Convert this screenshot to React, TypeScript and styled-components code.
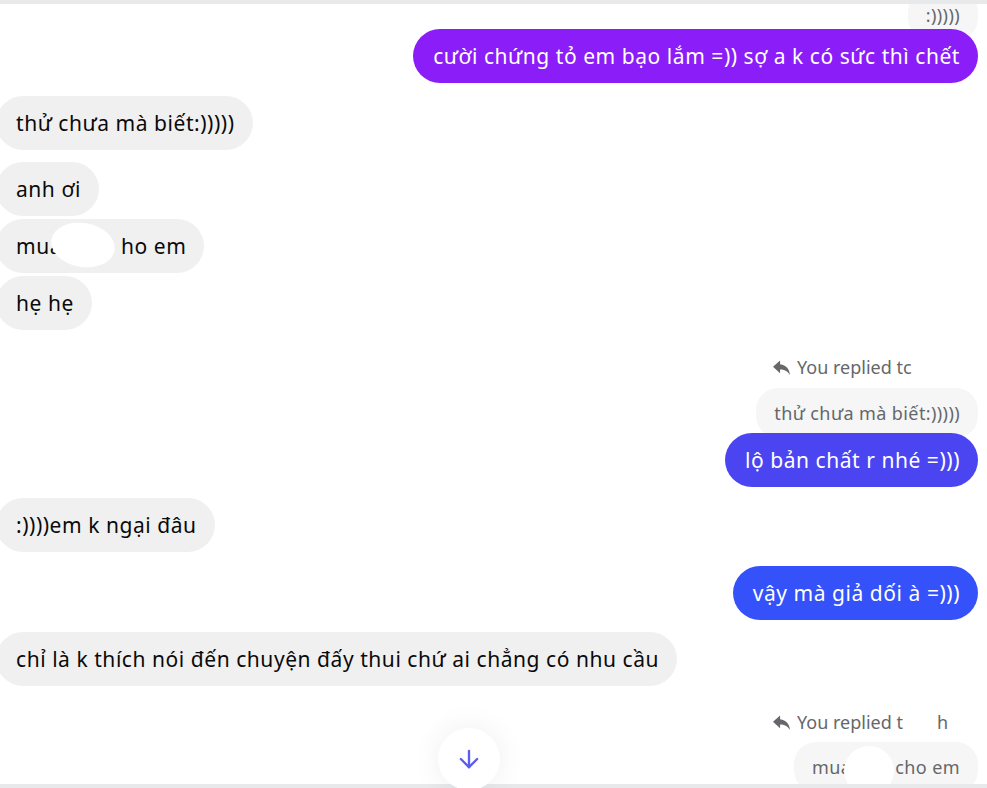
import { createGlobalStyle, styled } from 'styled-components'
import { ArrowDown } from 'lucide-react'

const GlobalStyle = createGlobalStyle`
  html, body {
    margin: 0;
    padding: 0;
    background: #ffffff;
  }
  body {
    font-family: "Noto Sans", "Open Sans", sans-serif;
  }
`

const Page = styled.div`
  position: relative;
  width: 987px;
  height: 788px;
  display: flex;
  flex-direction: column;
  overflow: hidden;
  background: #ffffff;
`

const TopBar = styled.div`
  height: 4px;
  flex: none;
  background: #e8e9eb;
  position: relative;
  z-index: 2;
`

const Thread = styled.div`
  flex: 1;
  display: flex;
  flex-direction: column;
  overflow: hidden;
`

const BottomBar = styled.div`
  height: 4px;
  flex: none;
  background: #e8e9eb;
`

const Row = styled.div<{ $out?: boolean; $mt?: number }>`
  display: flex;
  justify-content: ${(p) => (p.$out ? 'flex-end' : 'flex-start')};
  margin-top: ${(p) => p.$mt ?? 0}px;
  padding-right: ${(p) => (p.$out ? 9 : 0)}px;
  flex: none;
`

const Bubble = styled.div<{ $bg?: string }>`
  position: relative;
  height: 54px;
  display: flex;
  align-items: center;
  padding: 0 18px 0 20px;
  border-radius: 27px;
  font-size: 21px;
  letter-spacing: 0.55px;
  white-space: nowrap;
  background: ${(p) => p.$bg ?? '#f0f0f0'};
  color: ${(p) => (p.$bg ? '#ffffff' : '#0a0a0a')};
  margin-left: ${(p) => (p.$bg ? 0 : -4)}px;
  z-index: 1;
`

const Preview = styled.div`
  position: relative;
  height: 50px;
  display: flex;
  align-items: center;
  padding: 0 18px;
  border-radius: 22px;
  background: #f6f6f6;
  color: #65676b;
  font-size: 18px;
  letter-spacing: 0.4px;
  white-space: nowrap;
`

const ReplyMeta = styled.div`
  width: 206px;
  height: 22px;
  display: flex;
  align-items: center;
  gap: 6px;
  color: #65676b;
  font-size: 18px;
  white-space: nowrap;
  position: relative;

  svg {
    flex: none;
  }
`

const Gap = styled.span<{ $w: number }>`
  display: inline-block;
  width: ${(p) => p.$w}px;
`

const Blob = styled.span<{ $x: number; $y: number; $w: number; $h: number; $r?: number }>`
  position: absolute;
  left: ${(p) => p.$x}px;
  top: ${(p) => p.$y}px;
  width: ${(p) => p.$w}px;
  height: ${(p) => p.$h}px;
  border-radius: 50%;
  background: #ffffff;
  transform: rotate(${(p) => p.$r ?? 0}deg);
`

const ScrollDown = styled.button`
  all: unset;
  position: absolute;
  left: 438px;
  top: 728px;
  width: 62px;
  height: 62px;
  border-radius: 50%;
  background: #ffffff;
  display: flex;
  align-items: center;
  justify-content: center;
  color: #5b5cf0;
  box-shadow: 0 0 30px rgba(0, 0, 0, 0.07);
  z-index: 3;
`

function ReplyIcon() {
  return (
    <svg width="19" height="17" viewBox="0 0 20 18" fill="#65676b">
      <path d="M8.5 1.5 L1 8.2 L8.5 15 V11 C13 11 16.5 12.5 19 17 C18.4 11 15 6.2 8.5 5.6 Z" />
    </svg>
  )
}

export default function App() {
  return (
    <Page>
      <GlobalStyle />
      <TopBar />
      <Thread>
        <Row $out $mt={-14}>
          <Preview>:)))))</Preview>
        </Row>
        <Row $out $mt={-11}>
          <Bubble $bg="#8b1df8">cười chứng tỏ em bạo lắm =)) sợ a k có sức thì chết</Bubble>
        </Row>
        <Row $mt={13}>
          <Bubble>thử chưa mà biết:)))))</Bubble>
        </Row>
        <Row $mt={12}>
          <Bubble>anh ơi</Bubble>
        </Row>
        <Row $mt={3}>
          <Bubble>
            mua
            <Gap $w={59} />
            ho em
            <Blob $x={55} $y={4} $w={64} $h={44} $r={10} />
          </Bubble>
        </Row>
        <Row $mt={3}>
          <Bubble>hẹ hẹ</Bubble>
        </Row>
        <Row $out $mt={26}>
          <ReplyMeta>
            <ReplyIcon />
            You replied tc
          </ReplyMeta>
        </Row>
        <Row $out $mt={10}>
          <Preview>thử chưa mà biết:)))))</Preview>
        </Row>
        <Row $out $mt={-5}>
          <Bubble $bg="#4a44f1">lộ bản chất r nhé =)))</Bubble>
        </Row>
        <Row $mt={11}>
          <Bubble>:))))em k ngại đâu</Bubble>
        </Row>
        <Row $out $mt={14}>
          <Bubble $bg="#3551fa">vậy mà giả dối à =)))</Bubble>
        </Row>
        <Row $mt={12}>
          <Bubble>chỉ là k thích nói đến chuyện đấy thui chứ ai chẳng có nhu cầu</Bubble>
        </Row>
        <Row $out $mt={25}>
          <ReplyMeta>
            <ReplyIcon />
            <span>
              You replied t
              <Gap $w={34} />
              h
            </span>
          </ReplyMeta>
        </Row>
        <Row $out $mt={9}>
          <Preview>
            mua
            <Gap $w={44} />
            cho em
            <Blob $x={50} $y={4} $w={50} $h={50} $r={-10} />
          </Preview>
        </Row>
      </Thread>
      <BottomBar />
      <ScrollDown aria-label="Scroll to bottom">
        <ArrowDown size={28} strokeWidth={2} />
      </ScrollDown>
    </Page>
  )
}
